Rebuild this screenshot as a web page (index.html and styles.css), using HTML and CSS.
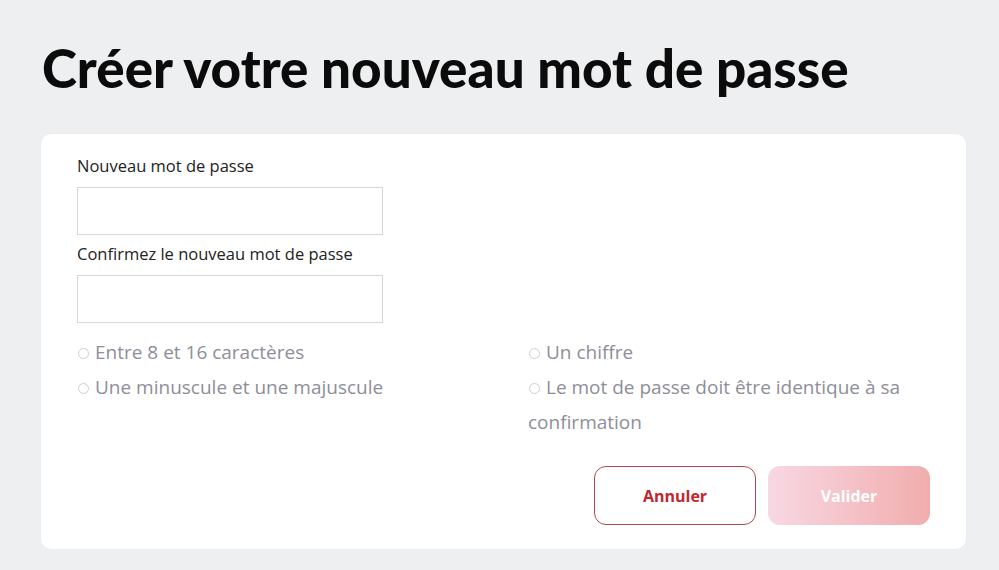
FILE: index.html
```html
<!DOCTYPE html>
<html lang="fr">
<head>
<meta charset="utf-8">
<link rel="stylesheet" href="styles.css">
</head>
<body>
<main class="page">
  <h1 class="title">Créer votre nouveau mot de passe</h1>
  <section class="card">
    <div class="field">
      <label class="label" for="pw1">Nouveau mot de passe</label>
      <input class="input" id="pw1" type="password">
    </div>
    <div class="field">
      <label class="label" for="pw2">Confirmez le nouveau mot de passe</label>
      <input class="input" id="pw2" type="password">
    </div>
    <ul class="rules">
      <li class="rule"><span class="dot"></span>Entre 8 et 16 caractères</li>
      <li class="rule"><span class="dot"></span>Un chiffre</li>
      <li class="rule"><span class="dot"></span>Une minuscule et une majuscule</li>
      <li class="rule"><span class="dot"></span>Le mot de passe doit être identique à sa confirmation</li>
    </ul>
    <div class="actions">
      <button class="btn btn-cancel" type="button">Annuler</button>
      <button class="btn btn-submit" type="button">Valider</button>
    </div>
  </section>
</main>
</body>
</html>
```

FILE: styles.css
```css
* { box-sizing: border-box; }
html, body { margin: 0; padding: 0; }
body {
  background: #eeeff1;
  font-family: "Open Sans", "Noto Sans", sans-serif;
  color: #222;
}
.page {
  padding: 36px 33px 20px 41px;
}
.title {
  margin: 0 0 34px 1px;
  font-family: "Lato", sans-serif;
  font-weight: 900;
  font-size: 53px;
  line-height: 64px;
  color: #0b0b0b;
  letter-spacing: 0;
}
.card {
  background: #fff;
  border-radius: 10px;
  padding: 20px 36px 24px 36px;
  box-shadow: 0 0 2px rgba(0,0,0,0.04);
}
.field {
  display: flex;
  flex-direction: column;
  width: 306px;
}
.label {
  font-size: 16.5px;
  line-height: 23px;
  color: #222;
  margin-bottom: 10px;
}
.input {
  height: 48px;
  width: 306px;
  border: 1px solid #d6d6d6;
  background: #fff;
  margin: 0 0 7px 0;
  outline: none;
}
.rules {
  list-style: none;
  margin: 5px 0 0 0;
  padding: 0;
  display: grid;
  grid-template-columns: 451px 410px;
  color: #8e8e98;
  font-size: 19px;
  line-height: 35px;
}
.dot {
  display: inline-block;
  width: 11px;
  height: 11px;
  border: 1px solid #cfcfd4;
  border-radius: 50%;
  margin: 0 6px 0 1px;
  vertical-align: 0;
}
.actions {
  display: flex;
  justify-content: flex-end;
  gap: 12px;
  margin-top: 26px;
}
.btn {
  width: 162px;
  height: 59px;
  border-radius: 12px;
  font-family: "Open Sans", sans-serif;
  font-weight: 700;
  font-size: 16px;
  cursor: pointer;
}
.btn-cancel {
  background: #fff;
  border: 1px solid #b3474a;
  color: #c1272d;
}
.btn-submit {
  border: none;
  color: #fff;
  background: linear-gradient(90deg, #f8d8e3 0%, #f1adad 100%);
}
```
